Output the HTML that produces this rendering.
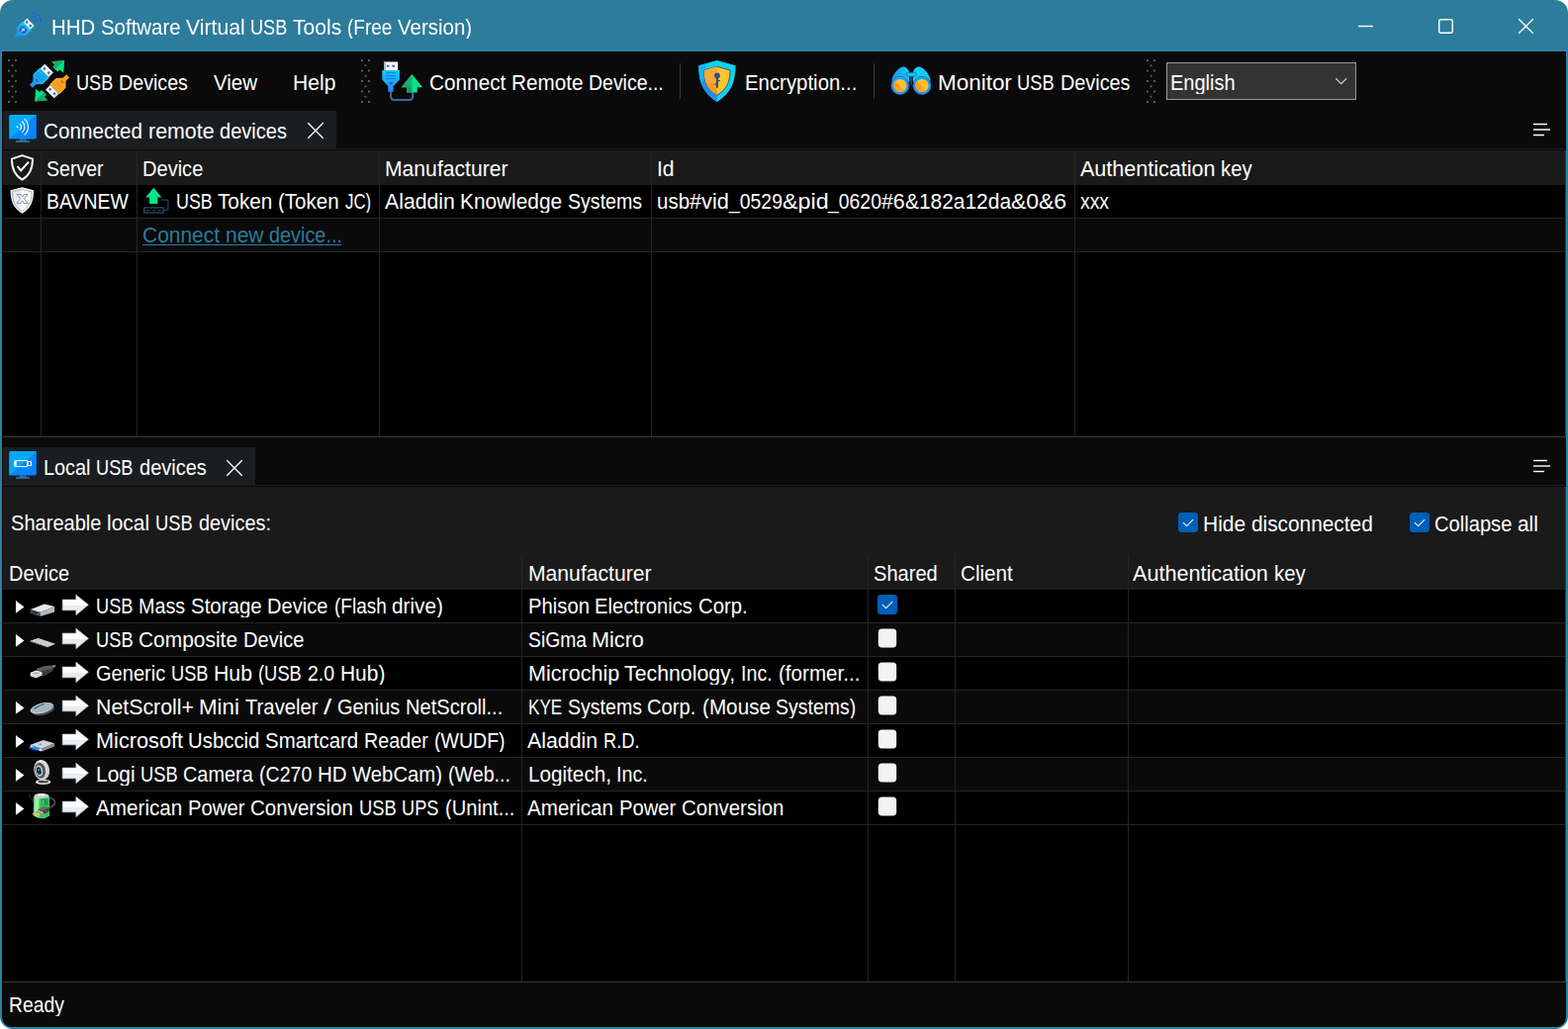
<!DOCTYPE html>
<html lang="en"><head><meta charset="utf-8"><title>HHD Software Virtual USB Tools (Free Version)</title>
<style>
html,body{margin:0;padding:0;background:#fff;}
body{width:1585px;height:1040px;overflow:hidden;position:relative;font-family:"Liberation Sans",sans-serif;font-size:21.0px;color:#fff;}
#win{position:absolute;left:0;top:0;width:1585px;height:1040px;background:#2d7c9b;border-radius:13px;overflow:hidden;}
.t,.b,svg{position:absolute;}
.t{white-space:pre;line-height:26px;height:26px;}
.w{display:inline-block;white-space:pre;transform-origin:0 0;height:26px;vertical-align:top;}
.b{display:block;}
a.t{text-decoration:none;}
.g{will-change:transform;}
</style></head>
<body>
<div id="win">
<div class="b" style="left:1px;top:1px;width:1583px;height:1038px;background:transparent;box-sizing:border-box;border:1px solid #3085a8;border-top-color:transparent;border-radius:12px;clip-path:inset(50px 0 0 0);"></div>
<div class="b" style="left:2px;top:51px;width:1581px;height:1px;background:#3085a8;"></div>
<div class="b" style="left:2px;top:52px;width:1581px;height:986px;background:#050202;border-radius:0 0 10px 10px;"></div>
<div class="b" style="left:3px;top:53px;width:1579px;height:985px;background:#0a0a0a;border-radius:0 0 9px 9px;"></div>
<div class="b" style="left:3px;top:112px;width:337px;height:38px;background:#1a1e21;"></div>
<div class="b" style="left:339px;top:112px;width:1px;height:38px;background:#1c1c1c;"></div>
<div class="b" style="left:3px;top:150px;width:1579px;height:1px;background:#1a1e21;"></div>
<div class="b" style="left:3px;top:151px;width:1579px;height:1px;background:#0a0a0a;"></div>
<div class="b" style="left:3px;top:152px;width:1579px;height:35px;background:#1a1a1a;"></div>
<div class="b" style="left:3px;top:187px;width:1579px;height:254px;background:#000000;"></div>
<div class="b" style="left:3px;top:221px;width:1579px;height:33px;background:#0a0a0a;"></div>
<div class="b" style="left:3px;top:220px;width:1579px;height:1px;background:#242424;"></div>
<div class="b" style="left:3px;top:254px;width:1579px;height:1px;background:#242424;"></div>
<div class="b" style="left:41px;top:152px;width:1px;height:289px;background:#242424;"></div>
<div class="b" style="left:138px;top:152px;width:1px;height:289px;background:#242424;"></div>
<div class="b" style="left:383px;top:152px;width:1px;height:289px;background:#242424;"></div>
<div class="b" style="left:658px;top:152px;width:1px;height:289px;background:#242424;"></div>
<div class="b" style="left:1086px;top:152px;width:1px;height:289px;background:#242424;"></div>
<div class="b" style="left:1582px;top:152px;width:1px;height:290px;background:#3a3634;"></div>
<div class="b" style="left:3px;top:441px;width:1580px;height:1px;background:#3c3c3c;"></div>
<div class="b" style="left:3px;top:442px;width:1580px;height:10px;background:#0a0a0a;"></div>
<div class="b" style="left:3px;top:452px;width:255px;height:38px;background:#1a1e21;"></div>
<div class="b" style="left:257px;top:452px;width:1px;height:38px;background:#1c1c1c;"></div>
<div class="b" style="left:3px;top:490px;width:1579px;height:1px;background:#1a1e21;"></div>
<div class="b" style="left:3px;top:491px;width:1579px;height:1px;background:#0a0a0a;"></div>
<div class="b" style="left:3px;top:492px;width:1579px;height:104px;background:#1a1a1a;"></div>
<div class="b" style="left:3px;top:596px;width:1579px;height:396px;background:#000000;"></div>
<div class="b" style="left:3px;top:629px;width:1579px;height:1px;background:#242424;"></div>
<div class="b" style="left:3px;top:630px;width:1579px;height:33px;background:#0a0a0a;"></div>
<div class="b" style="left:3px;top:663px;width:1579px;height:1px;background:#242424;"></div>
<div class="b" style="left:3px;top:697px;width:1579px;height:1px;background:#242424;"></div>
<div class="b" style="left:3px;top:698px;width:1579px;height:33px;background:#0a0a0a;"></div>
<div class="b" style="left:3px;top:731px;width:1579px;height:1px;background:#242424;"></div>
<div class="b" style="left:3px;top:765px;width:1579px;height:1px;background:#242424;"></div>
<div class="b" style="left:3px;top:766px;width:1579px;height:33px;background:#0a0a0a;"></div>
<div class="b" style="left:3px;top:799px;width:1579px;height:1px;background:#242424;"></div>
<div class="b" style="left:3px;top:833px;width:1579px;height:1px;background:#242424;"></div>
<div class="b" style="left:527px;top:561px;width:1px;height:431px;background:#242424;"></div>
<div class="b" style="left:877px;top:561px;width:1px;height:431px;background:#242424;"></div>
<div class="b" style="left:965px;top:561px;width:1px;height:431px;background:#242424;"></div>
<div class="b" style="left:1140px;top:561px;width:1px;height:431px;background:#242424;"></div>
<div class="b" style="left:1582px;top:492px;width:1px;height:501px;background:#3a3634;"></div>
<div class="b" style="left:3px;top:992px;width:1580px;height:1px;background:#3c3c3c;"></div>
<div class="b" style="left:687px;top:64px;width:1px;height:36px;background:#3a3a3a;"></div>
<div class="b" style="left:883px;top:64px;width:1px;height:36px;background:#3a3a3a;"></div>
<div class="b" style="left:1179px;top:63px;width:192px;height:38px;background:#333333;box-sizing:border-box;border:1px solid #9a9a9a;"></div>
<svg style="left:1191px;top:518px" width="20" height="20" viewBox="0 0 20 20"><rect x="0" y="0" width="20" height="20" rx="3.5" fill="#005fb8"/><path d="M5.2 10.4 L8.6 13.6 L14.8 7.4" fill="none" stroke="#e6eef8" stroke-width="1.2" stroke-linecap="round" stroke-linejoin="round"/></svg>
<svg style="left:1425px;top:518px" width="20" height="20" viewBox="0 0 20 20"><rect x="0" y="0" width="20" height="20" rx="3.5" fill="#005fb8"/><path d="M5.2 10.4 L8.6 13.6 L14.8 7.4" fill="none" stroke="#e6eef8" stroke-width="1.2" stroke-linecap="round" stroke-linejoin="round"/></svg>
<svg style="left:887px;top:601px" width="20" height="20" viewBox="0 0 20 20"><rect x="0" y="0" width="20" height="20" rx="3.5" fill="#005fb8"/><path d="M5.2 10.4 L8.6 13.6 L14.8 7.4" fill="none" stroke="#e6eef8" stroke-width="1.2" stroke-linecap="round" stroke-linejoin="round"/></svg>
<svg style="left:887px;top:635px" width="20" height="20" viewBox="0 0 20 20"><rect x="0.8" y="0.4" width="18.4" height="19" rx="3.6" fill="#f3f3f3"/></svg>
<svg style="left:887px;top:669px" width="20" height="20" viewBox="0 0 20 20"><rect x="0.8" y="0.4" width="18.4" height="19" rx="3.6" fill="#f3f3f3"/></svg>
<svg style="left:887px;top:703px" width="20" height="20" viewBox="0 0 20 20"><rect x="0.8" y="0.4" width="18.4" height="19" rx="3.6" fill="#f3f3f3"/></svg>
<svg style="left:887px;top:737px" width="20" height="20" viewBox="0 0 20 20"><rect x="0.8" y="0.4" width="18.4" height="19" rx="3.6" fill="#f3f3f3"/></svg>
<svg style="left:887px;top:771px" width="20" height="20" viewBox="0 0 20 20"><rect x="0.8" y="0.4" width="18.4" height="19" rx="3.6" fill="#f3f3f3"/></svg>
<svg style="left:887px;top:805px" width="20" height="20" viewBox="0 0 20 20"><rect x="0.8" y="0.4" width="18.4" height="19" rx="3.6" fill="#f3f3f3"/></svg>
<svg width="0" height="0" style="left:0;top:0"><defs>
<linearGradient id="gBlue" x1="0" y1="0" x2="0" y2="1"><stop offset="0" stop-color="#12cdf2"/><stop offset="1" stop-color="#1e88f7"/></linearGradient>
<linearGradient id="gBlueH" x1="1" y1="0" x2="0" y2="0"><stop offset="0" stop-color="#14cff2"/><stop offset="1" stop-color="#1e8ef6"/></linearGradient>
<linearGradient id="gOrange" x1="0" y1="0" x2="0" y2="1"><stop offset="0" stop-color="#ffb02a"/><stop offset="1" stop-color="#f59a1c"/></linearGradient>
<linearGradient id="gMetal" x1="0" y1="0" x2="1" y2="0"><stop offset="0" stop-color="#c9d6df"/><stop offset="0.2" stop-color="#f4f6f8"/><stop offset="1" stop-color="#ffffff"/></linearGradient>
<linearGradient id="gArrow" x1="0" y1="0" x2="0" y2="1"><stop offset="0" stop-color="#ffffff"/><stop offset="0.5" stop-color="#fbfcfd"/><stop offset="0.52" stop-color="#e7e9ec"/><stop offset="1" stop-color="#f4f6f8"/></linearGradient>
<linearGradient id="gShieldW" x1="0" y1="0" x2="1" y2="0"><stop offset="0" stop-color="#dfe7ee"/><stop offset="0.5" stop-color="#eef3f7"/><stop offset="0.5" stop-color="#ffffff"/><stop offset="1" stop-color="#f4f6f8"/></linearGradient>
<linearGradient id="gBody" x1="0" y1="0" x2="1" y2="0"><stop offset="0" stop-color="#1e8ef6"/><stop offset="1" stop-color="#12cbf1"/></linearGradient>
<radialGradient id="gCam" cx="0.4" cy="0.35" r="0.7"><stop offset="0" stop-color="#ffffff"/><stop offset="1" stop-color="#b9c0c6"/></radialGradient>
</defs></svg><svg style="left:8px;top:55px" width="10" height="55" viewBox="0 0 10 55" ><g fill="#595959"><rect x="0" y="5.00" width="2" height="2"/><rect x="7" y="5.00" width="2" height="2"/><rect x="3.5" y="10.25" width="2" height="2"/><rect x="0" y="15.50" width="2" height="2"/><rect x="7" y="15.50" width="2" height="2"/><rect x="3.5" y="20.75" width="2" height="2"/><rect x="0" y="26.00" width="2" height="2"/><rect x="7" y="26.00" width="2" height="2"/><rect x="3.5" y="31.25" width="2" height="2"/><rect x="0" y="36.50" width="2" height="2"/><rect x="7" y="36.50" width="2" height="2"/><rect x="3.5" y="41.75" width="2" height="2"/><rect x="0" y="47.00" width="2" height="2"/><rect x="7" y="47.00" width="2" height="2"/></g></svg><svg style="left:365px;top:55px" width="10" height="55" viewBox="0 0 10 55" ><g fill="#595959"><rect x="0" y="5.00" width="2" height="2"/><rect x="7" y="5.00" width="2" height="2"/><rect x="3.5" y="10.25" width="2" height="2"/><rect x="0" y="15.50" width="2" height="2"/><rect x="7" y="15.50" width="2" height="2"/><rect x="3.5" y="20.75" width="2" height="2"/><rect x="0" y="26.00" width="2" height="2"/><rect x="7" y="26.00" width="2" height="2"/><rect x="3.5" y="31.25" width="2" height="2"/><rect x="0" y="36.50" width="2" height="2"/><rect x="7" y="36.50" width="2" height="2"/><rect x="3.5" y="41.75" width="2" height="2"/><rect x="0" y="47.00" width="2" height="2"/><rect x="7" y="47.00" width="2" height="2"/></g></svg><svg style="left:1159px;top:55px" width="10" height="55" viewBox="0 0 10 55" ><g fill="#595959"><rect x="0" y="5.00" width="2" height="2"/><rect x="7" y="5.00" width="2" height="2"/><rect x="3.5" y="10.25" width="2" height="2"/><rect x="0" y="15.50" width="2" height="2"/><rect x="7" y="15.50" width="2" height="2"/><rect x="3.5" y="20.75" width="2" height="2"/><rect x="0" y="26.00" width="2" height="2"/><rect x="7" y="26.00" width="2" height="2"/><rect x="3.5" y="31.25" width="2" height="2"/><rect x="0" y="36.50" width="2" height="2"/><rect x="7" y="36.50" width="2" height="2"/><rect x="3.5" y="41.75" width="2" height="2"/><rect x="0" y="47.00" width="2" height="2"/><rect x="7" y="47.00" width="2" height="2"/></g></svg><svg style="left:1366px;top:12px" width="30" height="30" viewBox="0 0 30 30" ><path d="M7 14.5 H22" stroke="#fff" stroke-width="1.4" fill="none"/></svg><svg style="left:1446px;top:12px" width="30" height="30" viewBox="0 0 30 30" ><rect x="8.7" y="7.7" width="13.6" height="13.6" rx="2" fill="none" stroke="#fff" stroke-width="1.4"/></svg><svg style="left:1527px;top:12px" width="30" height="30" viewBox="0 0 30 30" ><path d="M8.2 7.2 L22.8 21.8 M22.8 7.2 L8.2 21.8" stroke="#fff" stroke-width="1.3" fill="none"/></svg><svg style="left:310px;top:123px" width="18" height="18" viewBox="0 0 18 18" ><path d="M1.3 1.3 L16.7 16.7 M16.7 1.3 L1.3 16.7" stroke="#fff" stroke-width="1.3" fill="none"/></svg><svg style="left:228px;top:464px" width="18" height="18" viewBox="0 0 18 18" ><path d="M1.3 1.3 L16.7 16.7 M16.7 1.3 L1.3 16.7" stroke="#fff" stroke-width="1.3" fill="none"/></svg><svg style="left:1548px;top:124px" width="22" height="16" viewBox="0 0 22 16" ><g stroke="#fff" stroke-width="1.4" fill="none"><path d="M2 1.5 H16"/><path d="M2 7 H19"/><path d="M2 12.5 H13"/></g></svg><svg style="left:1548px;top:464px" width="22" height="16" viewBox="0 0 22 16" ><g stroke="#fff" stroke-width="1.4" fill="none"><path d="M2 1.5 H16"/><path d="M2 7 H19"/><path d="M2 12.5 H13"/></g></svg><svg style="left:1347px;top:76px" width="18" height="12" viewBox="0 0 18 12" ><path d="M3.3 3.3 L8.7 8.6 L14.1 3.3" stroke="#d0d0d0" stroke-width="1.2" fill="none"/></svg><svg style="left:9px;top:6px" width="40" height="40" viewBox="0 0 40 40" ><path d="M22.4 13.3 A4.1 4.1 0 0 1 26.2 17.1" fill="none" stroke="#1667de" stroke-width="1.15"/><path d="M22.4 10.1 A7.3 7.3 0 0 1 29.4 17.1" fill="none" stroke="#1667de" stroke-width="1.15"/><path d="M22.4 6.8 A10.6 10.6 0 0 1 32.7 17.1" fill="none" stroke="#1667de" stroke-width="1.15"/><g transform="translate(22 16.25) rotate(45)"><path d="M-6.1 5.4 L6.1 5.4 L6.1 13.6 L1.9 17.8 L1.9 21.2 L-1.9 21.2 L-1.9 17.8 L-6.1 13.6 Z" fill="url(#gBlue)"/><circle cx="0.2" cy="11" r="3.7" fill="#1a62cc"/><path d="M0.2 8 V14.4 M-1.5 10.2 L0.2 11.6 L1.9 10.2" stroke="#e8f2ff" stroke-width="0.9" fill="none"/><rect x="-5.15" y="0" width="10.3" height="5.4" fill="#f3f5f7"/><rect x="-5.15" y="0" width="1.2" height="5.4" fill="#c4d0da" opacity="0.7"/><rect x="-3.725" y="1.75" width="2.3" height="2.3" fill="#2f66a8"/><rect x="1.425" y="1.75" width="2.3" height="2.3" fill="#2f66a8"/></g></svg><svg style="left:26px;top:56px" width="50" height="50" viewBox="0 0 50 50" ><path d="M39.2 5.05 L26.2 6.25 L29.4 9.5 L27.3 11.7 L32.3 16.5 L34.4 14.4 L38.2 17.8 Z" fill="#00e28b"/><path d="M39.2 5.05 L26.2 6.25 L29.4 9.5 L27.3 11.7 L29.8 14.1 Z" fill="#1fa76c"/><g transform="rotate(180 24.15 25.72)"><path d="M39.2 5.05 L26.2 6.25 L29.4 9.5 L27.3 11.7 L32.3 16.5 L34.4 14.4 L38.2 17.8 Z" fill="#00e28b"/><path d="M39.2 5.05 L26.2 6.25 L29.4 9.5 L27.3 11.7 L29.8 14.1 Z" fill="#1fa76c"/></g><g transform="translate(23.56 12.98) rotate(45)"><path d="M-7 6.6 L7 6.6 L7 15.8 L2.1 20.8 L2.1 25.8 L-2.1 25.8 L-2.1 20.8 L-7 15.8 Z" fill="url(#gBlue)"/><path d="M-4.8 8.2 H4.8" stroke="#1877dd" stroke-width="0.9"/><path d="M-4.8 10.2 H4.8" stroke="#1877dd" stroke-width="0.9"/><path d="M-4.8 12.2 H4.8" stroke="#1877dd" stroke-width="0.9"/><path d="M-4.8 14.2 H4.8" stroke="#1877dd" stroke-width="0.9"/><path d="M-2.6 16.4 L2.6 16.4 L0 19.2 Z" fill="#2a62d0"/><rect x="-6.1" y="0" width="12.2" height="6.6" fill="#f3f5f7"/><rect x="-6.1" y="0" width="1.2" height="6.6" fill="#c4d0da" opacity="0.7"/><rect x="-4.2" y="2.35" width="2.3" height="2.3" fill="#2f66a8"/><rect x="1.9" y="2.35" width="2.3" height="2.3" fill="#2f66a8"/></g><g transform="translate(24.4 39) rotate(225)"><path d="M-7 6.6 L7 6.6 L7 15.8 L2.1 20.8 L2.1 25.8 L-2.1 25.8 L-2.1 20.8 L-7 15.8 Z" fill="url(#gOrange)"/><path d="M-4.8 8.2 H4.8" stroke="#de8a12" stroke-width="0.9"/><path d="M-4.8 10.2 H4.8" stroke="#de8a12" stroke-width="0.9"/><path d="M-4.8 12.2 H4.8" stroke="#de8a12" stroke-width="0.9"/><path d="M-4.8 14.2 H4.8" stroke="#de8a12" stroke-width="0.9"/><path d="M-2.6 16.4 L2.6 16.4 L0 19.2 Z" fill="#d97508"/><rect x="-6.1" y="0" width="12.2" height="6.6" fill="#f3f5f7"/><rect x="-6.1" y="0" width="1.2" height="6.6" fill="#c4d0da" opacity="0.7"/><rect x="-4.2" y="2.35" width="2.3" height="2.3" fill="#2f66a8"/><rect x="1.9" y="2.35" width="2.3" height="2.3" fill="#2f66a8"/></g></svg><svg style="left:382px;top:56px" width="50" height="50" viewBox="0 0 50 50" ><path d="M13 36 V41 Q13 45 17 45 H31.3 Q35.3 45 35.3 41 V36.5" fill="none" stroke="#3b6996" stroke-width="2.1"/><path d="M4.3 15.1 H21.9 V24.6 L15.6 31.3 V36.8 H10.3 V31.3 L4.3 24.6 Z" fill="url(#gBlue)"/><path d="M8.2 17.5 H18" stroke="#1a78e2" stroke-width="1.2"/><path d="M8.2 20.5 H18" stroke="#1a78e2" stroke-width="1.2"/><path d="M8.2 23.5 H18" stroke="#1a78e2" stroke-width="1.2"/><path d="M10.8 27.1 H15.4 L13.1 30.2 Z" fill="#2a5ccd"/><rect x="6" y="6.5" width="14.2" height="8.5" fill="url(#gMetal)"/><rect x="6" y="6.5" width="1.9" height="8.5" fill="#9fb6c8"/><rect x="8.9" y="9.8" width="2.5" height="2" fill="#5c6494"/><rect x="14.4" y="9.8" width="2.7" height="2" fill="#5c6494"/><path d="M34.4 19 L45.2 32.2 H39.7 V37.5 H29.1 V32.2 H23.8 Z" fill="#00e68a"/><path d="M34.4 19 V32.2 H23.8 Z" fill="#21ab73"/><rect x="29.1" y="32.2" width="5.3" height="5.3" fill="#17995d"/></svg><svg style="left:700px;top:56px" width="50" height="50" viewBox="0 0 50 50" ><clipPath id="cSo"><path d="M24.8 5.05 L43.5 10.3 C43.5 27 39 38 24.8 46.9 C10.6 38 6.25 27 6.25 10.3 Z"/></clipPath><clipPath id="cSi"><path d="M24.8 11.3 L38 14.9 C38 27 34.8 34.2 24.8 40.1 C14.8 34.2 11.8 27 11.8 14.9 Z"/></clipPath><path d="M24.8 5.05 L43.5 10.3 C43.5 27 39 38 24.8 46.9 C10.6 38 6.25 27 6.25 10.3 Z" fill="#0fd3ee"/><g clip-path="url(#cSo)"><path d="M0 20 L24.8 28 V50 H0 Z" fill="#1e8ff6"/><path d="M0 8 H14 L10 30 L0 30 Z" fill="#17b4f2"/></g><path d="M24.8 11.3 L38 14.9 C38 27 34.8 34.2 24.8 40.1 C14.8 34.2 11.8 27 11.8 14.9 Z" fill="#ffc52d" stroke="#173a6d" stroke-width="0.8"/><g clip-path="url(#cSi)"><rect x="0" y="0" width="24.8" height="28" fill="#f6aa33"/><rect x="0" y="28" width="24.8" height="20" fill="#ff9a1e"/></g><circle cx="25" cy="20.4" r="2.9" fill="#2f507f"/><rect x="24" y="22.6" width="2" height="10.1" fill="#2f507f"/><rect x="26" y="24.8" width="1.9" height="1.4" fill="#2f507f"/><rect x="22.4" y="28.4" width="1.7" height="1.4" fill="#2f507f"/></svg><svg style="left:896px;top:56px" width="50" height="50" viewBox="0 0 50 50" ><path d="M5.3 25.5 C6.5 19 11.5 12.5 16.8 11.5 C20 11.3 22.5 14 23.2 17.5 L23.2 27 Z" fill="url(#gBody)"/><path d="M44.7 25.5 C43.5 19 38.5 12.5 33.2 11.5 C30 11.3 27.5 14 26.8 17.5 L26.8 27 Z" fill="#12cbf1"/><rect x="24.2" y="19" width="1.6" height="10.5" fill="#1d4f88"/><rect x="20.2" y="17.3" width="10.1" height="3.9" rx="1.6" fill="#14c4f1" stroke="#1b4b86" stroke-width="0.6"/><circle cx="13.9" cy="30.5" r="9.2" fill="#1e98f6" stroke="#1b4b86" stroke-width="0.5"/><circle cx="13.9" cy="30.5" r="8.1" fill="none" stroke="#12bff0" stroke-width="0.9" stroke-dasharray="13 38" transform="rotate(-150 13.9 30.5)"/><clipPath id="cL13"><circle cx="13.9" cy="30.5" r="6.6"/></clipPath><g clip-path="url(#cL13)"><rect x="5.9" y="22" width="16" height="17" fill="#ffc42c"/><path d="M6.4 23 L19.4 38 H6.4 Z" fill="#ff9b20"/><path d="M12.7 30 L19.7 38 H12.7 Z" fill="#f4ab35"/></g><circle cx="36.05" cy="30.5" r="9.2" fill="#1e98f6" stroke="#1b4b86" stroke-width="0.5"/><circle cx="36.05" cy="30.5" r="8.1" fill="none" stroke="#12bff0" stroke-width="0.9" stroke-dasharray="13 38" transform="rotate(-150 36.05 30.5)"/><clipPath id="cL36"><circle cx="36.05" cy="30.5" r="6.6"/></clipPath><g clip-path="url(#cL36)"><rect x="28.05" y="22" width="16" height="17" fill="#ffc42c"/><path d="M28.55 23 L41.55 38 H28.55 Z" fill="#ff9b20"/><path d="M34.85 30 L41.85 38 H34.85 Z" fill="#f4ab35"/></g></svg><svg style="left:3px;top:110px" width="40" height="40" viewBox="0 0 40 40" ><rect x="16.5" y="30.4" width="7.3" height="1.8" fill="#35668f"/><rect x="13" y="32.1" width="14" height="1.8" fill="#3a6b97"/><path d="M7.6 6 H33.85 V29.2 L32.4 30.6 H6.35 V7.3 Z" fill="#0a84ff"/><path d="M7.6 6 H33.85 L6.35 30.6 V7.3 Z" fill="#05a9f5"/><circle cx="14.6" cy="18.3" r="1" fill="#fff"/><path d="M17.26 15.45 A3.9 3.9 0 0 1 17.26 21.15" fill="none" stroke="#f4faff" stroke-width="1.15" stroke-linecap="round"/><path d="M19.58 12.96 A7.3 7.3 0 0 1 19.58 23.64" fill="none" stroke="#f4faff" stroke-width="1.15" stroke-linecap="round"/><path d="M21.97 10.40 A10.8 10.8 0 0 1 21.97 26.20" fill="none" stroke="#f4faff" stroke-width="1.15" stroke-linecap="round"/></svg><svg style="left:3px;top:450px" width="40" height="40" viewBox="0 0 40 40" ><rect x="16.5" y="30.4" width="7.3" height="1.8" fill="#35668f"/><rect x="13" y="32.1" width="14" height="1.8" fill="#3a6b97"/><path d="M7.6 6 H33.85 V29.2 L32.4 30.6 H6.35 V7.3 Z" fill="#0a84ff"/><path d="M7.6 6 H33.85 L6.35 30.6 V7.3 Z" fill="#05a9f5"/><path d="M13.1 15.5 H24 L24.6 16.2 V20.9 L24 21.5 H13.1 Z" fill="none" stroke="#fff" stroke-width="1.1"/><path d="M11.2 16.3 L12.2 15.6 H13.1 V21.4 H12.2 L11.2 20.7 Z" fill="#fff"/><rect x="25.2" y="16.5" width="3.2" height="4" fill="none" stroke="#fff" stroke-width="1.05"/></svg><svg style="left:3px;top:152px" width="40" height="36" viewBox="0 0 40 36" ><path d="M19.4 5.2 L30 8.6 C30 19 27 25.5 19.4 29.6 C11.8 25.5 8.9 19 8.9 8.6 Z" fill="none" stroke="#fff" stroke-width="1.9" stroke-linejoin="round"/><path d="M14.6 16 L18.1 20.4 L26 11.6" fill="none" stroke="#fff" stroke-width="2"/></svg><svg style="left:3px;top:184px" width="40" height="36" viewBox="0 0 40 36" ><path d="M19.4 5.2 L31.1 8.3 C31.1 19.5 28 27 19.4 31.7 C10.8 27 7.5 19.5 7.5 8.3 Z" fill="url(#gShieldW)"/><path d="M19.4 7.3 L29.2 9.9 C29.2 19 26.5 25.4 19.4 29.5 C12.3 25.4 9.5 19 9.5 9.9 Z" fill="none" stroke="#8d9aa6" stroke-width="0.7"/><path d="M14.2 12.4 H18 L19.6 14.9 L21.3 12.4 H25 L21.5 16.8 L25.2 21.5 H21.2 L19.5 18.9 L17.8 21.5 H14 L17.7 16.8 Z" fill="#f5f8fa" stroke="#6f7b86" stroke-width="0.8"/></svg><svg style="left:138px;top:184px" width="40" height="36" viewBox="0 0 40 36" ><path d="M17.3 5.8 L25.4 15.4 H21.3 V21.9 H13.1 V15.4 H9.2 Z" fill="#00e68a"/><rect x="7.8" y="25.9" width="19.4" height="5.1" fill="none" stroke="#35608b" stroke-width="1"/><path d="M10 28.8 H13.5 M15.8 28.8 H19 M21.5 28.8 H25" stroke="#2b4b68" stroke-width="1.1"/><path d="M25.2 17.9 H30 Q31.9 17.9 31.9 19.8 V26.6 Q31.9 28.5 30 28.5 H27.7" fill="none" stroke="#20394f" stroke-width="1.5"/></svg><svg style="left:8px;top:594px" width="90" height="36" viewBox="0 0 90 36" ><path d="M7.95 13.1 L16.45 19.6 L7.95 25.85 Z" fill="#fff"/><path d="M22.7 22.1 L36.9 16.5 L47.1 19 L32.7 25 Z" fill="#e6e9ec"/><path d="M22.7 22.1 L32.7 25 V29 L22.7 26.1 Z" fill="#4a5056"/><path d="M23.6 23.3 L31.8 25.7 V27.6 L23.6 25.2 Z" fill="#2a2e32"/><rect x="30.2" y="25.6" width="1.4" height="1.5" fill="#1aa7a0"/><path d="M32.7 25 L47.1 19 V24.4 L32.7 29 Z" fill="#b5babf"/><path d="M55.2 12.1 H68.9 V7.3 L81.4 17.3 L68.9 27.6 V22.8 H55.2 Z" fill="url(#gArrow)" stroke="#b9d2e2" stroke-width="0.7" stroke-linejoin="miter"/></svg><svg style="left:8px;top:628px" width="90" height="36" viewBox="0 0 90 36" ><path d="M7.95 13.1 L16.45 19.6 L7.95 25.85 Z" fill="#fff"/><path d="M22.4 19.8 L30.7 17 L48 22.7 L40.3 25.9 Z" fill="#d5dbe0"/><path d="M22.4 19.8 L40.3 25.9 L40.3 26.6 L22.4 20.5 Z" fill="#8e979f"/><path d="M26 18.8 L43.5 24.6 M28.8 17.8 L46 23.5 M27 20.6 L33 18.3 M32 22.4 L38.5 20 M37 24.2 L43.5 21.8" stroke="#aab3bb" stroke-width="0.5" fill="none"/><path d="M55.2 12.1 H68.9 V7.3 L81.4 17.3 L68.9 27.6 V22.8 H55.2 Z" fill="url(#gArrow)" stroke="#b9d2e2" stroke-width="0.7" stroke-linejoin="miter"/></svg><svg style="left:8px;top:662px" width="90" height="36" viewBox="0 0 90 36" ><path d="M44.6 10.2 L48.1 10 L48.3 12.3 L45.4 13 Z" fill="#7a7a7a"/><path d="M28.6 13.8 L37.6 10.9 L44.4 10.6 Q46 12 45.5 15.8 L37 20.9 L33.6 20.4 Z" fill="#5b5b5b"/><path d="M33.6 16.6 L45.6 13.4 L45.5 15.8 L37 20.9 L33.6 20.4 Z" fill="#3a3a3a"/><path d="M22.7 17.8 L28.6 15.5 L34.4 17.4 L34.5 20.6 L28.4 23.2 L22.7 21.2 Z" fill="#eef0f2"/><path d="M23.8 18.4 L28.5 16.7 L33 18.1 L28.4 20.2 Z" fill="#b3bcc4"/><path d="M24 19.6 L28.3 21.3 L28.3 22.4 L24 20.9 Z" fill="#c9d0d6"/><path d="M28.4 21.4 L33.6 19.2" stroke="#6aa7d2" stroke-width="0.6"/><path d="M55.2 12.1 H68.9 V7.3 L81.4 17.3 L68.9 27.6 V22.8 H55.2 Z" fill="url(#gArrow)" stroke="#b9d2e2" stroke-width="0.7" stroke-linejoin="miter"/></svg><svg style="left:8px;top:696px" width="90" height="36" viewBox="0 0 90 36" ><path d="M7.95 13.1 L16.45 19.6 L7.95 25.85 Z" fill="#fff"/><ellipse cx="35.8" cy="21.3" rx="11.6" ry="5.3" transform="rotate(-14 35.8 21.3)" fill="#4a4a4a"/><ellipse cx="34.3" cy="19.9" rx="11.9" ry="4.9" transform="rotate(-14 34.3 19.9)" fill="#c4cace"/><ellipse cx="34.9" cy="19.1" rx="11.3" ry="4.5" transform="rotate(-14 34.9 19.1)" fill="#9fb6c6"/><path d="M26.6 20.3 Q30 17.4 36.8 15.4" fill="none" stroke="#c3d2dc" stroke-width="2.4" stroke-linecap="round"/><path d="M26.8 20.2 Q30 17.6 36.6 15.5" fill="none" stroke="#3e4145" stroke-width="1.3" stroke-linecap="round"/><path d="M55.2 12.1 H68.9 V7.3 L81.4 17.3 L68.9 27.6 V22.8 H55.2 Z" fill="url(#gArrow)" stroke="#b9d2e2" stroke-width="0.7" stroke-linejoin="miter"/></svg><svg style="left:8px;top:730px" width="90" height="36" viewBox="0 0 90 36" ><path d="M7.95 13.1 L16.45 19.6 L7.95 25.85 Z" fill="#fff"/><path d="M22.7 22.7 L35.8 17.9 L47.1 21.3 L34.1 26.7 Z" fill="#d2d5d8"/><path d="M34.1 26.7 L47.1 21.3 V24.4 L34.1 29.4 Z" fill="#8b9095"/><path d="M22.7 22.7 L34.1 26.7 V29.4 L22.7 25.4 Z" fill="#eceef0"/><path d="M21 25.6 L26.9 24.3 L33 26.6 L29.4 28.6 Z" fill="#1f8ff5"/><path d="M21 25.6 L29.4 28.6 L29.4 29.2 L21 26.2 Z" fill="#1266c4"/><path d="M31 22 L33.2 21.2 L34.4 22.4 L32.2 23.2 Z" fill="#3ba4f7"/><path d="M55.2 12.1 H68.9 V7.3 L81.4 17.3 L68.9 27.6 V22.8 H55.2 Z" fill="url(#gArrow)" stroke="#b9d2e2" stroke-width="0.7" stroke-linejoin="miter"/></svg><svg style="left:8px;top:764px" width="90" height="36" viewBox="0 0 90 36" ><path d="M7.95 13.1 L16.45 19.6 L7.95 25.85 Z" fill="#fff"/><ellipse cx="35.6" cy="26.4" rx="7.7" ry="2.7" fill="#d7dbde"/><ellipse cx="35.6" cy="26" rx="5.2" ry="1.3" fill="#3f4245"/><path d="M33 21 Q35.5 26 38.5 25.6 L37 20 Z" fill="#c2c7cb"/><ellipse cx="34.2" cy="14.3" rx="7.9" ry="10.4" transform="rotate(-10 34.2 14.3)" fill="url(#gCam)"/><ellipse cx="32.6" cy="14.6" rx="5.4" ry="8" transform="rotate(-10 32.6 14.6)" fill="#53575d"/><ellipse cx="31.6" cy="15" rx="3.6" ry="5.6" transform="rotate(-10 31.6 15)" fill="#c5cacf"/><ellipse cx="31.3" cy="15.2" rx="2.3" ry="3.9" transform="rotate(-10 31.3 15.2)" fill="#14171b"/><ellipse cx="31.2" cy="14" rx="1.1" ry="1.6" fill="#2f8fd0"/><ellipse cx="30.9" cy="18" rx="0.9" ry="1" fill="#2f8fd0"/><path d="M55.2 12.1 H68.9 V7.3 L81.4 17.3 L68.9 27.6 V22.8 H55.2 Z" fill="url(#gArrow)" stroke="#b9d2e2" stroke-width="0.7" stroke-linejoin="miter"/></svg><svg style="left:8px;top:798px" width="90" height="36" viewBox="0 0 90 36" ><path d="M7.95 13.1 L16.45 19.6 L7.95 25.85 Z" fill="#fff"/><path d="M21.4 4.2 Q21.8 10 25.8 12.2" fill="none" stroke="#3a3d42" stroke-width="0.8"/><path d="M42 8.4 Q47.6 9.2 47.4 13.5 Q46.8 16.8 42.4 18" fill="none" stroke="#454a52" stroke-width="1.9"/><path d="M26.2 7 H41.8 V26.6 Q34 31.6 26.2 26.6 Z" fill="#8ff59b"/><path d="M31.5 7 H41.8 V26.6 Q38 29.3 34 29.3 L31.5 29 Z" fill="#3dc563"/><rect x="34" y="9.2" width="6.2" height="6.6" fill="#1c9b52"/><rect x="35.2" y="10.6" width="1" height="4.6" fill="#7ee374"/><path d="M26.2 7 V26.6" stroke="#9aa0a4" stroke-width="0.7"/><ellipse cx="34" cy="6.4" rx="7.4" ry="2.7" fill="#c9cdd0"/><ellipse cx="33.6" cy="5.4" rx="3.6" ry="1.2" fill="#f4f9fc"/><path d="M29.7 20.4 L35.3 17.6 L42 18 L42.6 21.6 L36.6 24.9 L35.1 22.4 Z" fill="#4b4b4d"/><path d="M29.7 20.4 L35.3 17.6 L42 18 L36.2 20.6 Z" fill="#6d6d70"/><path d="M30 20.7 L35.1 22.4 L36.4 24.8 L31.2 22.9 Z" fill="#b4b6b8"/><path d="M24.4 24.2 L30.6 21.9 L31.2 23.2 L25 25.6 Z" fill="#e8b867"/><path d="M28.4 22.8 L30.6 21.9 L31.2 23.2 L29 24.1 Z" fill="#b27a22"/><path d="M28.6 26 L34.4 23.7 L35 25 L29.2 27.4 Z" fill="#e2ad5c"/><path d="M32.4 24.5 L34.4 23.7 L35 25 L33 25.8 Z" fill="#b27a22"/><path d="M55.2 12.1 H68.9 V7.3 L81.4 17.3 L68.9 27.6 V22.8 H55.2 Z" fill="url(#gArrow)" stroke="#b9d2e2" stroke-width="0.7" stroke-linejoin="miter"/></svg>
<div class="b" style="left:144.4px;top:246.7px;width:200.6px;height:1.2px;background:#2d7c9b;"></div>
<span class="t g" style="left:51.99px;top:14px;color:#ffffff"><span class="w" style="width:44.17px;transform:scale(0.9708,1.025)">HHD</span><span class="w" style="width:5.70px;transform:scale(0.9760,1.025)"> </span><span class="w" style="width:80.57px;transform:scale(0.9722,1.025)">Software</span><span class="w" style="width:5.70px;transform:scale(0.9760,1.025)"> </span><span class="w" style="width:59.66px;transform:scale(1.0085,1.025)">Virtual</span><span class="w" style="width:5.70px;transform:scale(0.9760,1.025)"> </span><span class="w" style="width:37.30px;transform:scale(0.8637,1.025)">USB</span><span class="w" style="width:5.70px;transform:scale(0.9760,1.025)"> </span><span class="w" style="width:49.19px;transform:scale(1.0032,1.025)">Tools</span><span class="w" style="width:5.70px;transform:scale(0.9760,1.025)"> </span><span class="w" style="width:45.46px;transform:scale(0.9059,1.025)">(Free</span><span class="w" style="width:5.70px;transform:scale(0.9760,1.025)"> </span><span class="w" style="width:75.17px;transform:scale(0.9757,1.025)">Version)</span></span>
<span class="t" style="left:77.19px;top:70px;color:#ffffff"><span class="w" style="width:37.36px;transform:scale(0.8651,1.025)">USB</span><span class="w" style="width:5.71px;transform:scale(0.9775,1.025)"> </span><span class="w" style="width:69.96px;transform:scale(0.9366,1.025)">Devices</span></span>
<span class="t" style="left:216.34px;top:70px;color:#ffffff"><span class="w" style="width:44.02px;transform:scale(0.9752,1.025)">View</span></span>
<span class="t" style="left:295.88px;top:70px;color:#ffffff"><span class="w" style="width:43.37px;transform:scale(1.0039,1.025)">Help</span></span>
<span class="t" style="left:434.06px;top:70px;color:#ffffff"><span class="w" style="width:77.37px;transform:scale(0.9892,1.025)">Connect</span><span class="w" style="width:5.79px;transform:scale(0.9913,1.025)"> </span><span class="w" style="width:72.53px;transform:scale(0.9864,1.025)">Remote</span><span class="w" style="width:5.79px;transform:scale(0.9913,1.025)"> </span><span class="w" style="width:75.73px;transform:scale(0.9269,1.025)">Device...</span></span>
<span class="t" style="left:752.69px;top:70px;color:#ffffff"><span class="w" style="width:113.31px;transform:scale(0.9706,1.025)">Encryption...</span></span>
<span class="t" style="left:947.78px;top:70px;color:#ffffff"><span class="w" style="width:74.85px;transform:scale(1.0689,1.025)">Monitor</span><span class="w" style="width:5.75px;transform:scale(0.9845,1.025)"> </span><span class="w" style="width:37.63px;transform:scale(0.8712,1.025)">USB</span><span class="w" style="width:5.75px;transform:scale(0.9845,1.025)"> </span><span class="w" style="width:70.46px;transform:scale(0.9433,1.025)">Devices</span></span>
<span class="t" style="left:1182.97px;top:70px;color:#ffffff"><span class="w" style="width:65.67px;transform:scale(0.9533,1.025)">English</span></span>
<span class="t" style="left:44.26px;top:119px;color:#ffffff"><span class="w" style="width:99.99px;transform:scale(0.9844,1.025)">Connected</span><span class="w" style="width:5.74px;transform:scale(0.9825,1.025)"> </span><span class="w" style="width:66.63px;transform:scale(1.0194,1.025)">remote</span><span class="w" style="width:5.74px;transform:scale(0.9825,1.025)"> </span><span class="w" style="width:67.96px;transform:scale(0.9544,1.025)">devices</span></span>
<span class="t" style="left:47.03px;top:157px;color:#ffffff"><span class="w" style="width:57.50px;transform:scale(0.9296,1.025)">Server</span></span>
<span class="t" style="left:143.96px;top:157px;color:#ffffff"><span class="w" style="width:61.32px;transform:scale(0.9550,1.025)">Device</span></span>
<span class="t" style="left:388.88px;top:157px;color:#ffffff"><span class="w" style="width:124.55px;transform:scale(1.0066,1.025)">Manufacturer</span></span>
<span class="t" style="left:663.74px;top:157px;color:#ffffff"><span class="w" style="width:17.62px;transform:scale(1.0057,1.025)">Id</span></span>
<span class="t" style="left:1091.64px;top:157px;color:#ffffff"><span class="w" style="width:136.60px;transform:scale(1.0262,1.025)">Authentication</span><span class="w" style="width:5.77px;transform:scale(0.9873,1.025)"> </span><span class="w" style="width:31.63px;transform:scale(0.9675,1.025)">key</span></span>
<span class="t" style="left:47.16px;top:190px;color:#ffffff"><span class="w" style="width:82.80px;transform:scale(0.9255,1.025)">BAVNEW</span></span>
<span class="t" style="left:177.96px;top:190px;color:#ffffff"><span class="w" style="width:36.80px;transform:scale(0.8522,1.025)">USB</span><span class="w" style="width:5.63px;transform:scale(0.9630,1.025)"> </span><span class="w" style="width:55.35px;transform:scale(0.9876,1.025)">Token</span><span class="w" style="width:5.63px;transform:scale(0.9630,1.025)"> </span><span class="w" style="width:61.55px;transform:scale(0.9765,1.025)">(Token</span><span class="w" style="width:5.63px;transform:scale(0.9630,1.025)"> </span><span class="w" style="width:26.24px;transform:scale(0.8032,1.025)">JC)</span></span>
<span class="t" style="left:388.55px;top:190px;color:#ffffff"><span class="w" style="width:70.89px;transform:scale(1.0119,1.025)">Aladdin</span><span class="w" style="width:5.74px;transform:scale(0.9829,1.025)"> </span><span class="w" style="width:103.09px;transform:scale(0.9920,1.025)">Knowledge</span><span class="w" style="width:5.74px;transform:scale(0.9829,1.025)"> </span><span class="w" style="width:75.14px;transform:scale(0.9333,1.025)">Systems</span></span>
<span class="t" style="left:663.88px;top:190px;color:#ffffff"><span class="w" style="width:33.08px;transform:scale(0.9769,1.025)">usb</span><span class="w" style="width:39.87px;transform:scale(1.0346,1.025)">#vid</span><span class="w" style="width:53.93px;transform:scale(0.9233,1.025)">_0529</span><span class="w" style="width:46.57px;transform:scale(1.1081,1.025)">&amp;pid</span><span class="w" style="width:53.93px;transform:scale(0.9233,1.025)">_0620</span><span class="w" style="width:23.70px;transform:scale(1.0144,1.025)">#6</span><span class="w" style="width:107.03px;transform:scale(0.9961,1.025)">&amp;182a12da</span><span class="w" style="width:28.12px;transform:scale(1.0947,1.025)">&amp;0</span><span class="w" style="width:28.12px;transform:scale(1.0947,1.025)">&amp;6</span></span>
<span class="t" style="left:1091.82px;top:190px;color:#ffffff"><span class="w" style="width:29.04px;transform:scale(0.9218,1.025)">xxx</span></span>
<a class="t" style="left:144.05px;top:224px;color:#2d7c9b"><span class="w" style="width:78.02px;transform:scale(0.9974,1.025)">Connect</span><span class="w" style="width:5.84px;transform:scale(0.9996,1.025)"> </span><span class="w" style="width:38.56px;transform:scale(1.0007,1.025)">new</span><span class="w" style="width:5.84px;transform:scale(0.9996,1.025)"> </span><span class="w" style="width:73.96px;transform:scale(0.9455,1.025)">device...</span></a>
<span class="t" style="left:44.23px;top:459px;color:#ffffff"><span class="w" style="width:47.50px;transform:scale(0.9461,1.025)">Local</span><span class="w" style="width:5.73px;transform:scale(0.9812,1.025)"> </span><span class="w" style="width:37.50px;transform:scale(0.8684,1.025)">USB</span><span class="w" style="width:5.73px;transform:scale(0.9812,1.025)"> </span><span class="w" style="width:67.87px;transform:scale(0.9532,1.025)">devices</span></span>
<span class="t" style="left:11.00px;top:515px;color:#ffffff"><span class="w" style="width:91.49px;transform:scale(0.9555,1.025)">Shareable</span><span class="w" style="width:5.78px;transform:scale(0.9886,1.025)"> </span><span class="w" style="width:43.05px;transform:scale(0.9964,1.025)">local</span><span class="w" style="width:5.78px;transform:scale(0.9886,1.025)"> </span><span class="w" style="width:37.78px;transform:scale(0.8749,1.025)">USB</span><span class="w" style="width:5.78px;transform:scale(0.9886,1.025)"> </span><span class="w" style="width:72.95px;transform:scale(0.9469,1.025)">devices:</span></span>
<span class="t" style="left:1216.39px;top:516px;color:#ffffff"><span class="w" style="width:43.17px;transform:scale(0.9993,1.025)">Hide</span><span class="w" style="width:5.73px;transform:scale(0.9805,1.025)"> </span><span class="w" style="width:122.76px;transform:scale(0.9918,1.025)">disconnected</span></span>
<span class="t" style="left:1450.29px;top:516px;color:#ffffff"><span class="w" style="width:78.36px;transform:scale(0.9589,1.025)">Collapse</span><span class="w" style="width:5.75px;transform:scale(0.9838,1.025)"> </span><span class="w" style="width:20.84px;transform:scale(0.9919,1.025)">all</span></span>
<span class="t" style="left:8.62px;top:566px;color:#ffffff"><span class="w" style="width:61.06px;transform:scale(0.9510,1.025)">Device</span></span>
<span class="t" style="left:533.53px;top:566px;color:#ffffff"><span class="w" style="width:124.55px;transform:scale(1.0066,1.025)">Manufacturer</span></span>
<span class="t" style="left:883.25px;top:566px;color:#ffffff"><span class="w" style="width:64.71px;transform:scale(0.9556,1.025)">Shared</span></span>
<span class="t" style="left:970.91px;top:566px;color:#ffffff"><span class="w" style="width:52.78px;transform:scale(0.9828,1.025)">Client</span></span>
<span class="t" style="left:1145.14px;top:566px;color:#ffffff"><span class="w" style="width:136.84px;transform:scale(1.0280,1.025)">Authentication</span><span class="w" style="width:5.78px;transform:scale(0.9890,1.025)"> </span><span class="w" style="width:31.68px;transform:scale(0.9692,1.025)">key</span></span>
<span class="t" style="left:96.93px;top:599px;color:#ffffff"><span class="w" style="width:37.50px;transform:scale(0.8683,1.025)">USB</span><span class="w" style="width:5.73px;transform:scale(0.9811,1.025)"> </span><span class="w" style="width:47.21px;transform:scale(0.9406,1.025)">Mass</span><span class="w" style="width:5.73px;transform:scale(0.9811,1.025)"> </span><span class="w" style="width:71.68px;transform:scale(0.9745,1.025)">Storage</span><span class="w" style="width:5.73px;transform:scale(0.9811,1.025)"> </span><span class="w" style="width:61.34px;transform:scale(0.9554,1.025)">Device</span><span class="w" style="width:5.73px;transform:scale(0.9811,1.025)"> </span><span class="w" style="width:52.95px;transform:scale(0.9073,1.025)">(Flash</span><span class="w" style="width:5.73px;transform:scale(0.9811,1.025)"> </span><span class="w" style="width:51.97px;transform:scale(0.9896,1.025)">drive)</span></span>
<span class="t" style="left:96.93px;top:633px;color:#ffffff"><span class="w" style="width:37.62px;transform:scale(0.8710,1.025)">USB</span><span class="w" style="width:5.75px;transform:scale(0.9843,1.025)"> </span><span class="w" style="width:100.10px;transform:scale(0.9971,1.025)">Composite</span><span class="w" style="width:5.75px;transform:scale(0.9843,1.025)"> </span><span class="w" style="width:61.54px;transform:scale(0.9585,1.025)">Device</span></span>
<span class="t" style="left:97.19px;top:667px;color:#ffffff"><span class="w" style="width:70.24px;transform:scale(0.9552,1.025)">Generic</span><span class="w" style="width:5.74px;transform:scale(0.9827,1.025)"> </span><span class="w" style="width:37.56px;transform:scale(0.8697,1.025)">USB</span><span class="w" style="width:5.74px;transform:scale(0.9827,1.025)"> </span><span class="w" style="width:39.05px;transform:scale(1.0136,1.025)">Hub</span><span class="w" style="width:5.74px;transform:scale(0.9827,1.025)"> </span><span class="w" style="width:43.89px;transform:scale(0.8744,1.025)">(USB</span><span class="w" style="width:5.74px;transform:scale(0.9827,1.025)"> </span><span class="w" style="width:27.15px;transform:scale(0.9296,1.025)">2.0</span><span class="w" style="width:5.74px;transform:scale(0.9827,1.025)"> </span><span class="w" style="width:45.38px;transform:scale(0.9967,1.025)">Hub)</span></span>
<span class="t" style="left:96.61px;top:701px;color:#ffffff"><span class="w" style="width:98.97px;transform:scale(1.0155,1.025)">NetScroll+</span><span class="w" style="width:5.76px;transform:scale(0.9860,1.025)"> </span><span class="w" style="width:40.96px;transform:scale(1.0634,1.025)">Mini</span><span class="w" style="width:5.76px;transform:scale(0.9860,1.025)"> </span><span class="w" style="width:73.54px;transform:scale(0.9644,1.025)">Traveler</span><span class="w" style="width:5.76px;transform:scale(0.9860,1.025)"> </span><span class="w" style="width:8.21px;transform:scale(1.4043,1.025)">/</span><span class="w" style="width:5.76px;transform:scale(0.9860,1.025)"> </span><span class="w" style="width:63.24px;transform:scale(0.9502,1.025)">Genius</span><span class="w" style="width:5.76px;transform:scale(0.9860,1.025)"> </span><span class="w" style="width:98.26px;transform:scale(0.9567,1.025)">NetScroll...</span></span>
<span class="t" style="left:96.58px;top:735px;color:#ffffff"><span class="w" style="width:88.03px;transform:scale(1.0334,1.025)">Microsoft</span><span class="w" style="width:5.74px;transform:scale(0.9828,1.025)"> </span><span class="w" style="width:72.42px;transform:scale(0.9694,1.025)">Usbccid</span><span class="w" style="width:5.74px;transform:scale(0.9828,1.025)"> </span><span class="w" style="width:94.23px;transform:scale(0.9729,1.025)">Smartcard</span><span class="w" style="width:5.74px;transform:scale(0.9828,1.025)"> </span><span class="w" style="width:64.80px;transform:scale(0.9407,1.025)">Reader</span><span class="w" style="width:5.74px;transform:scale(0.9828,1.025)"> </span><span class="w" style="width:71.56px;transform:scale(0.9297,1.025)">(WUDF)</span></span>
<span class="t" style="left:96.64px;top:769px;color:#ffffff"><span class="w" style="width:39.64px;transform:scale(0.9985,1.025)">Logi</span><span class="w" style="width:5.75px;transform:scale(0.9846,1.025)"> </span><span class="w" style="width:37.63px;transform:scale(0.8714,1.025)">USB</span><span class="w" style="width:5.75px;transform:scale(0.9846,1.025)"> </span><span class="w" style="width:70.74px;transform:scale(0.9470,1.025)">Camera</span><span class="w" style="width:5.75px;transform:scale(0.9846,1.025)"> </span><span class="w" style="width:53.31px;transform:scale(0.9320,1.025)">(C270</span><span class="w" style="width:5.75px;transform:scale(0.9846,1.025)"> </span><span class="w" style="width:29.65px;transform:scale(0.9772,1.025)">HD</span><span class="w" style="width:5.75px;transform:scale(0.9846,1.025)"> </span><span class="w" style="width:91.03px;transform:scale(0.9669,1.025)">WebCam)</span><span class="w" style="width:5.75px;transform:scale(0.9846,1.025)"> </span><span class="w" style="width:62.93px;transform:scale(0.9352,1.025)">(Web...</span></span>
<span class="t" style="left:96.95px;top:803px;color:#ffffff"><span class="w" style="width:87.38px;transform:scale(0.9851,1.025)">American</span><span class="w" style="width:5.76px;transform:scale(0.9861,1.025)"> </span><span class="w" style="width:57.58px;transform:scale(0.9673,1.025)">Power</span><span class="w" style="width:5.76px;transform:scale(0.9861,1.025)"> </span><span class="w" style="width:103.87px;transform:scale(0.9777,1.025)">Conversion</span><span class="w" style="width:5.76px;transform:scale(0.9861,1.025)"> </span><span class="w" style="width:37.69px;transform:scale(0.8726,1.025)">USB</span><span class="w" style="width:5.76px;transform:scale(0.9861,1.025)"> </span><span class="w" style="width:37.41px;transform:scale(0.8662,1.025)">UPS</span><span class="w" style="width:5.76px;transform:scale(0.9861,1.025)"> </span><span class="w" style="width:70.47px;transform:scale(0.9584,1.025)">(Unint...</span></span>
<span class="t" style="left:533.60px;top:599px;color:#ffffff"><span class="w" style="width:61.94px;transform:scale(0.9645,1.025)">Phison</span><span class="w" style="width:5.77px;transform:scale(0.9867,1.025)"> </span><span class="w" style="width:98.92px;transform:scale(0.9632,1.025)">Electronics</span><span class="w" style="width:5.77px;transform:scale(0.9867,1.025)"> </span><span class="w" style="width:49.63px;transform:scale(0.9664,1.025)">Corp.</span></span>
<span class="t" style="left:533.55px;top:633px;color:#ffffff"><span class="w" style="width:59.03px;transform:scale(0.9196,1.025)">SiGma</span><span class="w" style="width:5.72px;transform:scale(0.9780,1.025)"> </span><span class="w" style="width:52.91px;transform:scale(1.0306,1.025)">Micro</span></span>
<span class="t" style="left:533.50px;top:667px;color:#ffffff"><span class="w" style="width:92.18px;transform:scale(1.0258,1.025)">Microchip</span><span class="w" style="width:5.75px;transform:scale(0.9836,1.025)"> </span><span class="w" style="width:112.06px;transform:scale(1.0138,1.025)">Technology,</span><span class="w" style="width:5.75px;transform:scale(0.9836,1.025)"> </span><span class="w" style="width:31.68px;transform:scale(0.9356,1.025)">Inc.</span><span class="w" style="width:5.75px;transform:scale(0.9836,1.025)"> </span><span class="w" style="width:82.48px;transform:scale(0.9817,1.025)">(former...</span></span>
<span class="t" style="left:533.85px;top:701px;color:#ffffff"><span class="w" style="width:34.26px;transform:scale(0.8151,1.025)">KYE</span><span class="w" style="width:5.73px;transform:scale(0.9806,1.025)"> </span><span class="w" style="width:74.96px;transform:scale(0.9310,1.025)">Systems</span><span class="w" style="width:5.73px;transform:scale(0.9806,1.025)"> </span><span class="w" style="width:49.33px;transform:scale(0.9604,1.025)">Corp.</span><span class="w" style="width:5.73px;transform:scale(0.9806,1.025)"> </span><span class="w" style="width:68.99px;transform:scale(0.9851,1.025)">(Mouse</span><span class="w" style="width:5.73px;transform:scale(0.9806,1.025)"> </span><span class="w" style="width:81.28px;transform:scale(0.9287,1.025)">Systems)</span></span>
<span class="t" style="left:533.45px;top:735px;color:#ffffff"><span class="w" style="width:71.19px;transform:scale(1.0161,1.025)">Aladdin</span><span class="w" style="width:5.77px;transform:scale(0.9871,1.025)"> </span><span class="w" style="width:36.52px;transform:scale(0.8696,1.025)">R.D.</span></span>
<span class="t" style="left:533.56px;top:769px;color:#ffffff"><span class="w" style="width:83.98px;transform:scale(0.9853,1.025)">Logitech,</span><span class="w" style="width:5.76px;transform:scale(0.9859,1.025)"> </span><span class="w" style="width:31.76px;transform:scale(0.9379,1.025)">Inc.</span></span>
<span class="t" style="left:533.46px;top:803px;color:#ffffff"><span class="w" style="width:87.02px;transform:scale(0.9810,1.025)">American</span><span class="w" style="width:5.74px;transform:scale(0.9820,1.025)"> </span><span class="w" style="width:57.34px;transform:scale(0.9633,1.025)">Power</span><span class="w" style="width:5.74px;transform:scale(0.9820,1.025)"> </span><span class="w" style="width:103.44px;transform:scale(0.9737,1.025)">Conversion</span></span>
<span class="t" style="left:9.27px;top:1002px;color:#ffffff"><span class="w" style="width:55.78px;transform:scale(0.9189,1.025)">Ready</span></span>
</div>
</body></html>
